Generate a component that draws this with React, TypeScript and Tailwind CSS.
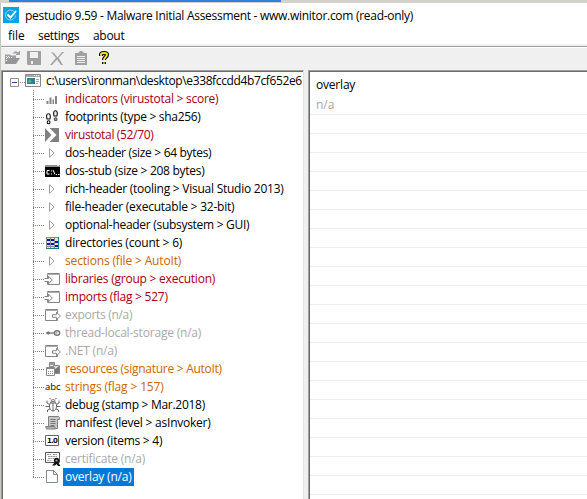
import React from "react";

type Row = { icon: string; text: string; color: string; tracking: string; selected?: boolean };

const RED = "text-[#a50010]";
const ORANGE = "text-[#cc6600]";
const GRAY = "text-[#a9a9a9]";
const BLACK = "text-black";

const rows: Row[] = [
  { icon: "bars", text: "indicators (virustotal > score)", color: RED, tracking: "tracking-[-0.26px]" },
  { icon: "feet", text: "footprints (type > sha256)", color: BLACK, tracking: "tracking-[-0.3px]" },
  { icon: "vt", text: "virustotal (52/70)", color: RED, tracking: "tracking-[-0.34px]" },
  { icon: "tri", text: "dos-header (size > 64 bytes)", color: BLACK, tracking: "tracking-[-0.32px]" },
  { icon: "dos", text: "dos-stub (size > 208 bytes)", color: BLACK, tracking: "tracking-[-0.28px]" },
  { icon: "tri", text: "rich-header (tooling > Visual Studio 2013)", color: BLACK, tracking: "tracking-[-0.25px]" },
  { icon: "tri", text: "file-header (executable > 32-bit)", color: BLACK, tracking: "tracking-[-0.23px]" },
  { icon: "tri", text: "optional-header (subsystem > GUI)", color: BLACK, tracking: "tracking-[-0.29px]" },
  { icon: "table", text: "directories (count > 6)", color: BLACK, tracking: "tracking-[-0.2px]" },
  { icon: "tri", text: "sections (file > AutoIt)", color: ORANGE, tracking: "tracking-[-0.16px]" },
  { icon: "import", text: "libraries (group > execution)", color: RED, tracking: "tracking-[-0.23px]" },
  { icon: "import", text: "imports (flag > 527)", color: RED, tracking: "tracking-[-0.25px]" },
  { icon: "export", text: "exports (n/a)", color: GRAY, tracking: "tracking-[-0.3px]" },
  { icon: "tls", text: "thread-local-storage (n/a)", color: GRAY, tracking: "tracking-[-0.2px]" },
  { icon: "export", text: ".NET (n/a)", color: GRAY, tracking: "tracking-[-0.2px]" },
  { icon: "res", text: "resources (signature > AutoIt)", color: ORANGE, tracking: "tracking-[-0.27px]" },
  { icon: "abc", text: "strings (flag > 157)", color: ORANGE, tracking: "tracking-[-0.15px]" },
  { icon: "bug", text: "debug (stamp > Mar.2018)", color: BLACK, tracking: "tracking-[-0.28px]" },
  { icon: "scroll", text: "manifest (level > asInvoker)", color: BLACK, tracking: "tracking-[-0.23px]" },
  { icon: "ver", text: "version (items > 4)", color: BLACK, tracking: "tracking-[-0.25px]" },
  { icon: "cert", text: "certificate (n/a)", color: GRAY, tracking: "tracking-[-0.22px]" },
  { icon: "page", text: "overlay (n/a)", color: "text-white", tracking: "tracking-[-0.2px]", selected: true },
];

function Icon({ name }: { name: string }) {
  if (name === "abc") return <span className="w-4 shrink-0 text-[9.5px] leading-4 text-black">abc</span>;
  return (
    <svg width="16" height="16" viewBox="0 0 16 16" fill="none" className="shrink-0 overflow-visible">
      {name === "bars" && (
        <path d="M1.500 13V10h2v3zM4.500 13V6.500h2V13zM7.500 13V8.500h1.500V13zM10 13V5h2v8z" fill="#858585" />
      )}
      {name === "feet" && (
        <g stroke="#111" strokeWidth="1.100">
          <path d="M3.500 4.800C.9 4.800 1.500 8 2 10h3c.4-2 .8-5.200-1.500-5.200z" />
          <path d="M10.500 1.800C8 1.800 8.500 5 9 7h3c.4-2 .8-5.200-1.500-5.200z" fill="#e8e8e8" />
          <rect x="2.300" y="11.700" width="2.600" height="3" rx="1" />
          <rect x="9.300" y="8.700" width="2.600" height="2.800" rx="1" fill="#999" stroke="#555" />
        </g>
      )}
      {name === "vt" && (
        <g>
          <path d="M0 1h14v14H0z" fill="#808080" />
          <path d="M0 1h4.500l7 7-7 7H0l6.500-7z" fill="#fff" />
        </g>
      )}
      {name === "tri" && <path d="M4.500 3.700l4.500 4.300-4.500 4.300z" stroke="#a0a0a0" fill="#fff" />}
      {name === "dos" && (
        <g>
          <path d="M0 2h15v12H0z" fill="#000" />
          <path d="M0 2h15v2H0z" fill="#909090" />
          <path d="M12 2.500h2" stroke="#ddd" />
          <path d="M4.500 7.500H2v3.500h2.500M6.500 7.500v1M6.500 10.500v1M8 7l2 4.500M11 11.500h1M13 11.500h1.500" stroke="#fff" />
        </g>
      )}
      {name === "table" && (
        <g shapeRendering="crispEdges">
          <path d="M1 2h13v12H1z" fill="#e0e0e0" />
          <path d="M2 4h3v2H2zM2 8h3v2H2zM6 4h3v2H6zM6 8h3v2H6zM10 6h3v2h-3zM10 10h3v2h-3z" fill="#1010d0" />
          <path d="M1.500 2v12M5.500 2v12M9.500 2v12M1 2.500h12M1 11.500h8" stroke="#8a8a8a" />
          <path d="M13.500 2v12M1 13.500h13" stroke="#208080" />
        </g>
      )}
      {(name === "import" || name === "export") && (
        <g>
          <path d={name === "import" ? "M2.500 2.500h12v11h-12z" : "M.5 2.500h12v11H.5z"} fill="#fff" stroke="#858585" />
          <path d={name === "import" ? "M2 3.500h13" : "M0 3.500h13"} stroke="#aaa" />
          {name === "import" ? (
            <path d="M-.5 7.500h4V5.200L7.300 9l-3.800 3.800v-2.300h-4" fill="#fff" stroke="#858585" />
          ) : (
            <path d="M7.500 7.700h4V5.200L15.300 9l-3.800 3.800v-2.500h-4z" fill="#fff" stroke="#858585" />
          )}
        </g>
      )}
      {name === "tls" && (
        <g stroke="#777">
          <path d="M1 8h9" strokeWidth="1.300" />
          <circle cx="3.300" cy="8" r="1.200" fill="#777" />
          <ellipse cx="12" cy="8" rx="2.700" ry="2.200" fill="#fff" strokeWidth="1.400" />
          <path d="M10.500 8h2" />
        </g>
      )}
      {name === "res" && (
        <g stroke="#888">
          <path d="M4.500 1.500h5v4h-5z" fill="#fff" />
          <path d="M5 2h4v2H5z" fill="#999" stroke="none" />
          <path d="M8.500 4.500h6v8h-6z" fill="#ddd" />
          <path d="M9 9l5-4v7H9z" fill="#777" stroke="none" />
          <path d="M1.500 6.500h8v8h-8z" fill="#fff" />
          <path d="M1.500 7.500h8M3 10.500h1M5 10.500h1M7 10.500h1M3 12.500h1M5 12.500h1M7 12.500h1" />
        </g>
      )}
      {name === "bug" && (
        <g stroke="#555" strokeWidth=".9">
          <path d="M8 4.500c-3 0-3.500 2.500-3.500 4.500 0 3 1.500 5 3.500 5s3.500-2 3.500-5c0-2-.5-4.500-3.500-4.500zM5.500 6h5M8 6v8" fill="#fff" />
          <path d="M6 4.500c0-2.500 4-2.500 4 0M6 2.500L4.500 1M10 2.500L11.500 1M4.500 7.500L2 6V3.500M11.500 7.500L14 6V3.500M4.500 9.500H.5M11.500 9.500h4M5 12l-2.500 1v2M11 12l2.500 1v2" />
        </g>
      )}
      {name === "scroll" && (
        <g stroke="#808080">
          <path d="M3.500 1.500h10l1 1v2h-2v9h-9z" fill="#c8c8c8" />
          <path d="M5.500 4.500h5M5.500 6.500h5M5.500 8.500h5M5.500 10.500h4" stroke="#777" />
          <path d="M.5 11.500h9l1 2.500H1.500z" fill="#b0b0b0" />
        </g>
      )}
      {name === "ver" && (
        <g>
          <path d="M.5 2.500h13v10H.5z" stroke="#666" fill="#fff" />
          <text x="2 6.200 8" y="10.300" fontSize="7" fontWeight="700" fill="#111" fontFamily="DejaVu Sans, sans-serif">1.0</text>
        </g>
      )}
      {name === "cert" && (
        <g>
          <path d="M.5 1.500h14v10H.5z" fill="#fff" stroke="#555" />
          <path d="M2 3.500h4M8 3.500h4M3 5.500h9M3 7.500h6M2 9.500h5" stroke="#999" strokeDasharray="2 .5" />
          <circle cx="11.500" cy="9.500" r="2.700" fill="#111" />
          <path d="M10 11l-3 3.500h3l1.500-1.500 1.500 2h2.500l-2.500-4z" fill="#111" />
          <circle cx="11.500" cy="9.500" r="1.100" fill="#999" />
        </g>
      )}
      {name === "page" && <path d="M1.500 1.500h7l4 4v8h-11zM8.500 1.500v4h4" stroke="#888" fill="#fff" />}
    </svg>
  );
}

function Toolbar() {
  return (
    <div className="flex h-[22px] shrink-0 items-center bg-[#f0f0f0] pl-[3px]">
      <svg width="110" height="22" viewBox="4 48 110 22" fill="none">
        <g fill="#a0a0a0">
          <path d="M5 54.500h5l1 1h5v3H9l-4 6z" />
          <path d="M9 58h11l-4 6H5z" fill="#969696" />
          <path d="M6 56h1v1H6zM8 56h1v1H8zM7 57h1v1H7zM9 57h1v1H9zM6 58h1v1H6zM11 57h1v1h-1zM6 60h1v1H6z" fill="#e8e8e8" />
          <path d="M13 53.500c2-2.500 4-2 5.500 0M19.500 51v3.500h-3.500" stroke="#a0a0a0" />
          <path d="M27 51h14v14H28l-1-1zM30 52v6h8v-6zM31 61v3h2v-3z" fillRule="evenodd" />
          <path d="M51 52l3 1 3.500 4.500L62 52h2l-5.500 6 4.500 7h-2l-4-5.500L52 65h-2l6-7z" />
          <path d="M75 53h3l2-2h2l2 2h3v12H75zM77 56v7h8v-7z" fillRule="evenodd" />
          <path d="M77 57h8v1h-8zM77 59h8v1h-8zM77 61h8v1h-8z" />
        </g>
        <path d="M101 56v-1.500c0-2 6-2 6 0 0 2.500-3 2.500-3 5.500M104 62v2" stroke="#000" strokeWidth="4" />
        <path d="M101 56v-1.500c0-2 6-2 6 0 0 2.500-3 2.500-3 5.500M104 62.200v1.600" stroke="#f5ee20" strokeWidth="1.800" />
      </svg>
    </div>
  );
}

export default function App() {
  return (
    <div className="flex h-[499px] w-[587px] flex-col overflow-hidden bg-white font-['Open_Sans','Noto_Sans',sans-serif] text-[12px] leading-[18px] text-black">
      <div className="flex h-[3px] shrink-0 bg-[#d4d2cb]">
        <div className="ml-[9px] h-[2px] w-[272px] bg-[#2f80e0]" />
      </div>
      <div className="flex min-h-0 flex-1 flex-col border-l border-[#c8c6c0]">
        <div className="flex h-[23px] shrink-0 items-center pl-[2px]">
          <svg width="16" height="16" viewBox="0 0 16 16" className="mt-px shrink-0">
            <path d="M0 0h16v16H0z" fill="#0aa1e6" />
            <path d="M11 4.500a5 5 0 1 0 1.500 4" stroke="#8ed6f4" fill="none" />
            <path d="M4.500 7.500l3 3L13 4" stroke="#fff" strokeWidth="1.900" fill="none" />
          </svg>
          <span className="ml-[6px] mt-[2px] whitespace-nowrap tracking-[-0.285px]">pestudio 9.59 - Malware Initial Assessment - www.winitor.com (read-only)</span>
        </div>
        <div className="flex h-[18px] shrink-0 items-center pl-[7px] pt-[2px]">
          <span className="w-[30px]">file</span>
          <span className="w-[55px] tracking-[-0.3px]">settings</span>
          <span className="tracking-[-0.3px]">about</span>
        </div>
        <div className="h-[3px] shrink-0 border-b border-[#a0a0a0] bg-[#f0f0f0]" />
        <div className="h-px shrink-0 bg-white" />
        <Toolbar />
        <div className="flex min-h-0 flex-1 bg-[#f0f0f0]">
          <div className="flex w-[303px] shrink-0 border-l border-r border-t border-l-[#a0a0a0] border-r-[#e3e3e3] border-t-[#a0a0a0]">
            <div className="min-w-0 flex-1 border-l border-t border-[#696969] bg-white">
              <div className="flex h-[18px] items-center pl-[7px]">
                <svg width="31" height="18" viewBox="10 72 31 18" fill="none" className="shrink-0">
                  <path d="M10.500 78.500h8v8h-8z" fill="#fff" stroke="#919191" />
                  <path d="M12 82.500h5" stroke="#3040a0" />
                  <path d="M20 82.500h5" stroke="#808080" strokeDasharray="1 1" />
                  <path d="M25.500 74.500h15v12h-15z" fill="#fff" stroke="#858585" />
                  <path d="M26 75h14v2H26z" fill="#a8a8a8" />
                  <path d="M34 75.500h1M36 75.500h1M38 75.500h1" stroke="#fff" />
                  <path d="M27 78h8v6h-8z" fill="#2b8295" />
                  <path d="M29 79l3 3-4 1z" fill="#63b38e" />
                  <path d="M36 79.500h3M36 81.500h3M36 83.500h2" stroke="#aaa" />
                </svg>
                <span className="ml-[5px] whitespace-nowrap tracking-[-0.37px]">c:\users\ironman\desktop\e338fccdd4b7cf652e6</span>
              </div>
              {rows.map((row, i) => (
                <div key={row.text} className="flex h-[18px] items-center pl-[30px]">
                  <svg width="12" height="18" className="shrink-0" shapeRendering="crispEdges">
                    <path d={i === rows.length - 1 ? "M.5 0v10" : "M.5 0v18"} stroke="#808080" strokeDasharray="1 1" />
                    <path d="M0 9.500h12" stroke="#808080" strokeDasharray="1 1" />
                  </svg>
                  <Icon name={row.icon} />
                  <span className={`ml-[2px] h-[18px] whitespace-nowrap px-[2px] ${row.color} ${row.tracking} ${row.selected ? "bg-[#0078d7]" : ""}`}>{row.text}</span>
                </div>
              ))}
            </div>
          </div>
          <div className="ml-1 flex flex-1 border-l border-t border-[#a0a0a0]">
            <div className="flex-1 border-l border-t border-[#696969] bg-white">
              <div className="flex h-[23px] items-center pl-[6px] pt-[2px] tracking-[-0.2px]">overlay</div>
              <div className="flex h-5 items-center border-b border-[#f0f0f0] pl-[6px] text-[#a9a9a9]">n/a</div>
              {Array.from({ length: 20 }, (_, i) => (
                <div key={i} className="h-[19px] border-b border-[#f0f0f0]" />
              ))}
            </div>
          </div>
        </div>
      </div>
    </div>
  );
}
